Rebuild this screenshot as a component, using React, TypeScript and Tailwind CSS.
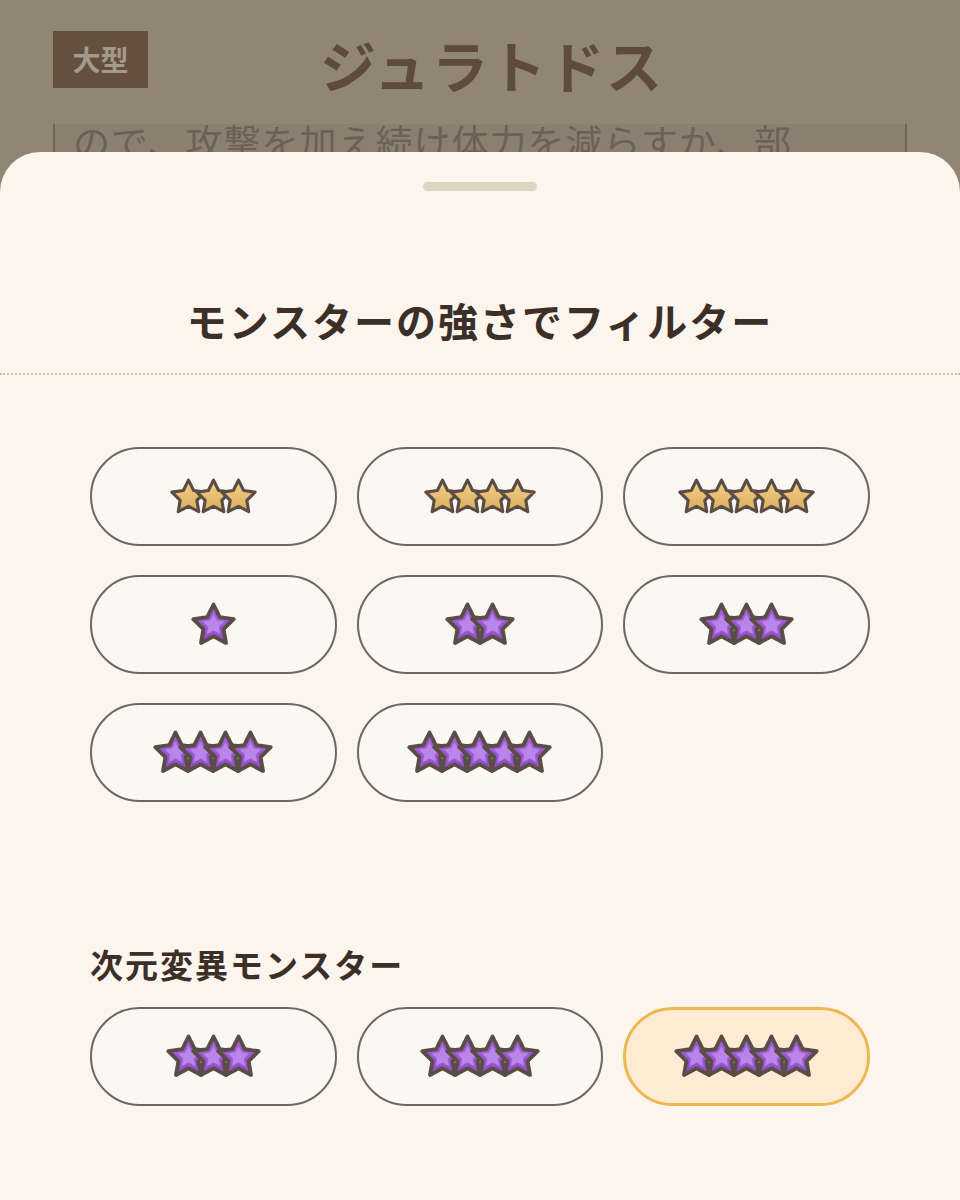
import { useId } from "react";

const font = { fontFamily: '"Noto Sans CJK JP", "Noto Sans", sans-serif' };

const STAR =
  "M12 2.5 L14.94 8.46 L21.51 9.41 L16.76 14.05 L17.88 20.59 L12 17.5 L6.12 20.59 L7.24 14.05 L2.49 9.41 L9.06 8.46 Z";
const INNER =
  "M12 6.4 L13.7 9.8 L17.5 10.35 L14.75 13.05 L15.4 16.8 L12 15 L8.6 16.8 L9.25 13.05 L6.5 10.35 L10.3 9.8 Z";

function Star({ purple, size }: { purple?: boolean; size: number }) {
  const id = useId();
  return (
    <svg width={size} height={size} viewBox="1.4 1.6 21.2 20.6" className="shrink-0">
      <defs>
        <linearGradient id={id} x1="0" y1="0" x2="0" y2="1">
          {purple ? (
            <>
              <stop offset="0" stopColor="#a462da" />
              <stop offset="1" stopColor="#8c4cc4" />
            </>
          ) : (
            <>
              <stop offset="0" stopColor="#f4d08a" />
              <stop offset="1" stopColor="#dcac5c" />
            </>
          )}
        </linearGradient>
      </defs>
      <path d={STAR} fill={`url(#${id})`} stroke="#5a4d45" strokeWidth="1.8" strokeLinejoin="round" />
      {purple && <path d={INNER} fill="#bb84ea" stroke="#9d60d4" strokeWidth="0.5" strokeLinejoin="round" />}
    </svg>
  );
}

function Stars({ count, purple }: { count: number; purple?: boolean }) {
  return (
    <div className="flex items-center">
      {Array.from({ length: count }).map((_, i) => (
        <div key={i} className={i === 0 ? "" : purple ? "-ml-[20px]" : "-ml-[12px]"}>
          <Star purple={purple} size={purple ? 45 : 37} />
        </div>
      ))}
    </div>
  );
}

function Pill({ count, purple, selected }: { count: number; purple?: boolean; selected?: boolean }) {
  return (
    <button
      className={
        selected
          ? "h-[99px] rounded-full border-[3px] border-[#efb84f] bg-[#fdebd3] flex items-center justify-center"
          : "h-[99px] rounded-full border-[2.5px] border-[#6d6661] bg-[#fbf7f2] flex items-center justify-center"
      }
    >
      <Stars count={count} purple={purple} />
    </button>
  );
}

export default function App() {
  return (
    <div className="w-[960px] h-[1200px] overflow-hidden bg-[#918574] flex flex-col" style={font}>
      {/* page behind the sheet */}
      <div className="h-[124px] flex items-center pl-[53px] pr-[124px] pb-[6px]">
        <div className="w-[95px] h-[57px] bg-[#65503f] flex items-center justify-center text-[28px] font-bold text-[#a49a8b]">
          大型
        </div>
        <div className="flex-1 mt-[10px] text-center text-[56px] font-bold text-[#5e4b3c] tracking-[2px]">ジュラトドス</div>
      </div>
      <div className="h-[28px] mx-[53px] border-x-2 border-[#6e6358] bg-[#8b7f70] overflow-hidden">
        <div className="pl-[18px] text-[37px] leading-[40px] -mt-[3px] text-[#6c6157] whitespace-nowrap tracking-[1px]">
          ので、攻撃を加え続け体力を減らすか、部
        </div>
      </div>

      {/* bottom sheet */}
      <div className="flex-1 bg-[#fbf5ee] rounded-t-[40px] flex flex-col">
        <div className="mx-auto mt-[30px] w-[114px] h-[9px] rounded-full bg-[#ddd5c2]" />
        <h2 className="mt-[105px] text-center text-[40px] leading-[48px] font-bold text-[#3b2f28] tracking-[2px]">
          モンスターの強さでフィルター
        </h2>
        <div className="mt-[29px] border-t-2 border-dotted border-[#c9c6a8]" />

        <div className="mt-[72px] px-[90px] grid grid-cols-3 gap-x-[20px] gap-y-[29px]">
          <Pill count={3} />
          <Pill count={4} />
          <Pill count={5} />
          <Pill count={1} purple />
          <Pill count={2} purple />
          <Pill count={3} purple />
          <Pill count={4} purple />
          <Pill count={5} purple />
        </div>

        <h3 className="mt-[142px] px-[90px] text-[33px] leading-[40px] font-bold text-[#3b2f28] tracking-[2px]">
          次元変異モンスター
        </h3>
        <div className="mt-[23px] px-[90px] grid grid-cols-3 gap-x-[20px]">
          <Pill count={3} purple />
          <Pill count={4} purple />
          <Pill count={5} purple selected />
        </div>
      </div>
    </div>
  );
}
